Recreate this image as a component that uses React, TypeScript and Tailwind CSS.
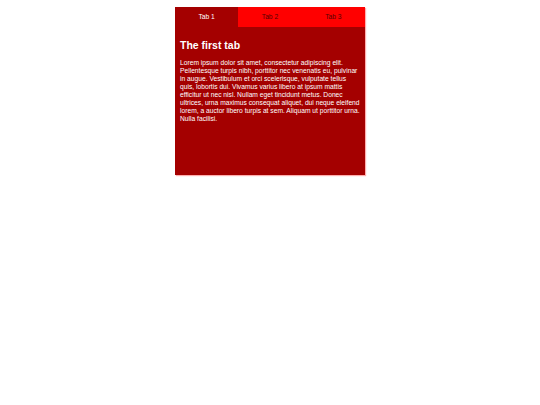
const TABS = ["Tab 1", "Tab 2", "Tab 3"];

export default function App() {
  return (
    <div className="w-[540px] h-[405px] bg-white font-['Liberation_Sans',Arial,sans-serif]">
      <div className="ml-[175px] pt-[7px]">
        <div className="w-[190px] h-[168px] bg-[#a40000] shadow-[1px_1px_1px_rgba(255,120,120,0.6)] flex flex-col">
          <div className="flex h-[20px]">
            {TABS.map((t, i) => (
              <div
                key={t}
                className={`flex-1 flex items-center justify-center text-[6.7px] ${
                  i === 0 ? "bg-[#a40000] text-white" : "bg-[#ff0000] text-[#550000]"
                }`}
              >
                {t}
              </div>
            ))}
          </div>
          <div className="px-[5px] pt-[12px] text-white">
            <h1 className="text-[10.5px] font-bold leading-[12px] mb-[8px]">The first tab</h1>
            <p className="text-[6.7px] leading-[8px]">
              Lorem ipsum dolor sit amet, consectetur adipiscing elit. Pellentesque turpis nibh, porttitor nec venenatis eu, pulvinar in augue. Vestibulum et orci scelerisque, vulputate tellus quis, lobortis dui. Vivamus varius libero at ipsum mattis efficitur ut nec nisl. Nullam eget tincidunt metus. Donec ultrices, urna maximus consequat aliquet, dui neque eleifend lorem, a auctor libero turpis at sem. Aliquam ut porttitor urna. Nulla facilisi.
            </p>
          </div>
        </div>
      </div>
    </div>
  );
}
